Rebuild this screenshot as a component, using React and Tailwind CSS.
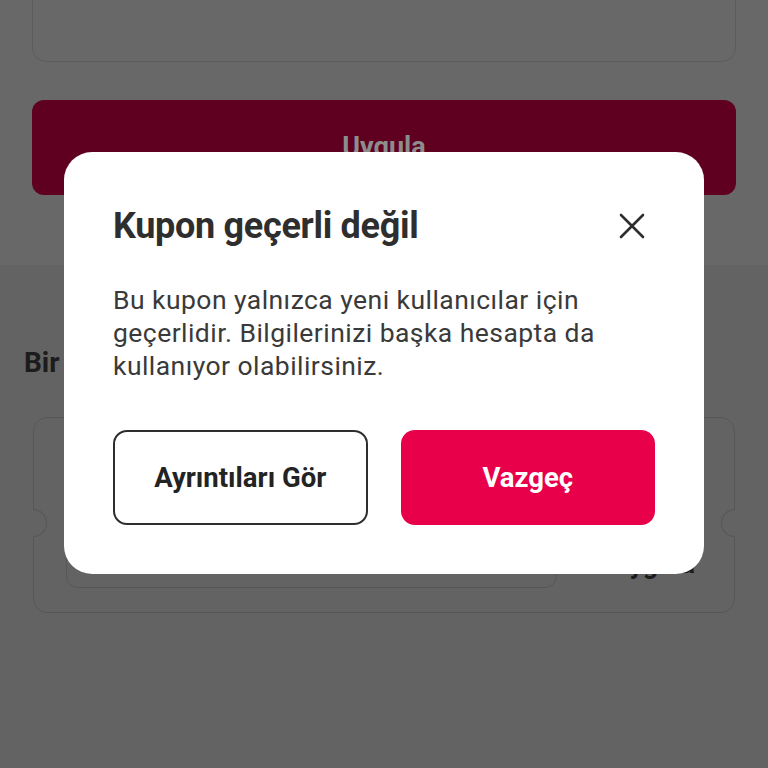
function CloseIcon() {
  return (
    <svg width="28" height="28" viewBox="0 0 28 28" fill="none" stroke="#2e2e2e" strokeWidth="2.6" strokeLinecap="round">
      <path d="M3 3L25 25M25 3L3 25" />
    </svg>
  )
}

function TicketNotch({ side }) {
  return (
    <span
      className={`absolute top-[91px] h-[28px] w-[14px] border border-[#575757] bg-[#636363] ${
        side === 'left' ? '-left-px rounded-r-full border-l-0' : '-right-px rounded-l-full border-r-0'
      }`}
    />
  )
}

export default function App() {
  return (
    <div
      className="relative h-[768px] w-[768px] overflow-hidden bg-[#636363]"
      style={{ fontFamily: 'Roboto, "Noto Sans", sans-serif' }}
    >
      {/* page behind the dim */}
      <div className="bg-[#686868] px-[32px] pb-[70px]">
        <div className="-mt-[60px] h-[122px] rounded-[14px] border border-[#5c5c5c] bg-[#686868]" />
        <div className="mt-[38px] flex h-[95px] items-center justify-center rounded-[12px] bg-[#5f0020] text-[27px] font-bold text-[#8d8d8d]">
          Uygula
        </div>
      </div>

      <div className="px-[24px] pt-[82px]">
        <h2 className="text-[28px] font-bold leading-[32px] text-[#1c1c1c]">Bir kupon kodun mu var?</h2>
      </div>

      <div className="relative mx-[33px] mt-[38px] flex h-[196px] items-end gap-[55px] rounded-[14px] border border-[#575757] pb-[24px] pl-[32px] pr-[39px]">
        <TicketNotch side="left" />
        <TicketNotch side="right" />
        <div className="h-[52px] flex-1 rounded-[12px] border border-[#575757]" />
        <span className="pb-[4px] text-[27px] font-bold text-[#1c1c1c]">Uygula</span>
      </div>

      {/* modal */}
      <div className="absolute left-[64px] top-[152px] w-[640px] rounded-[28px] bg-white px-[49px] pb-[49px] pt-[52px]">
        <div className="flex items-center justify-between">
          <h1 className="text-[36px] font-bold leading-[44px] tracking-[-0.3px] text-[#2e2e2e]">Kupon geçerli değil</h1>
          <button type="button" className="mr-[8px] flex h-[30px] w-[30px] items-center justify-center">
            <CloseIcon />
          </button>
        </div>
        <p className="mt-[35px] text-[26.5px] leading-[33px] tracking-[0.45px] text-[#3a3a3a]">
          Bu kupon yalnızca yeni kullanıcılar için geçerlidir. Bilgilerinizi başka hesapta da kullanıyor olabilirsiniz.
        </p>
        <div className="mt-[48px] grid grid-cols-2 gap-[33px]">
          <button
            type="button"
            className="h-[95px] rounded-[14px] border-2 border-[#2e2e2e] bg-white text-[27.5px] font-bold text-[#232323]"
          >
            Ayrıntıları Gör
          </button>
          <button type="button" className="h-[95px] rounded-[14px] bg-[#e8004a] text-[27.5px] font-bold text-white">
            Vazgeç
          </button>
        </div>
      </div>
    </div>
  )
}
